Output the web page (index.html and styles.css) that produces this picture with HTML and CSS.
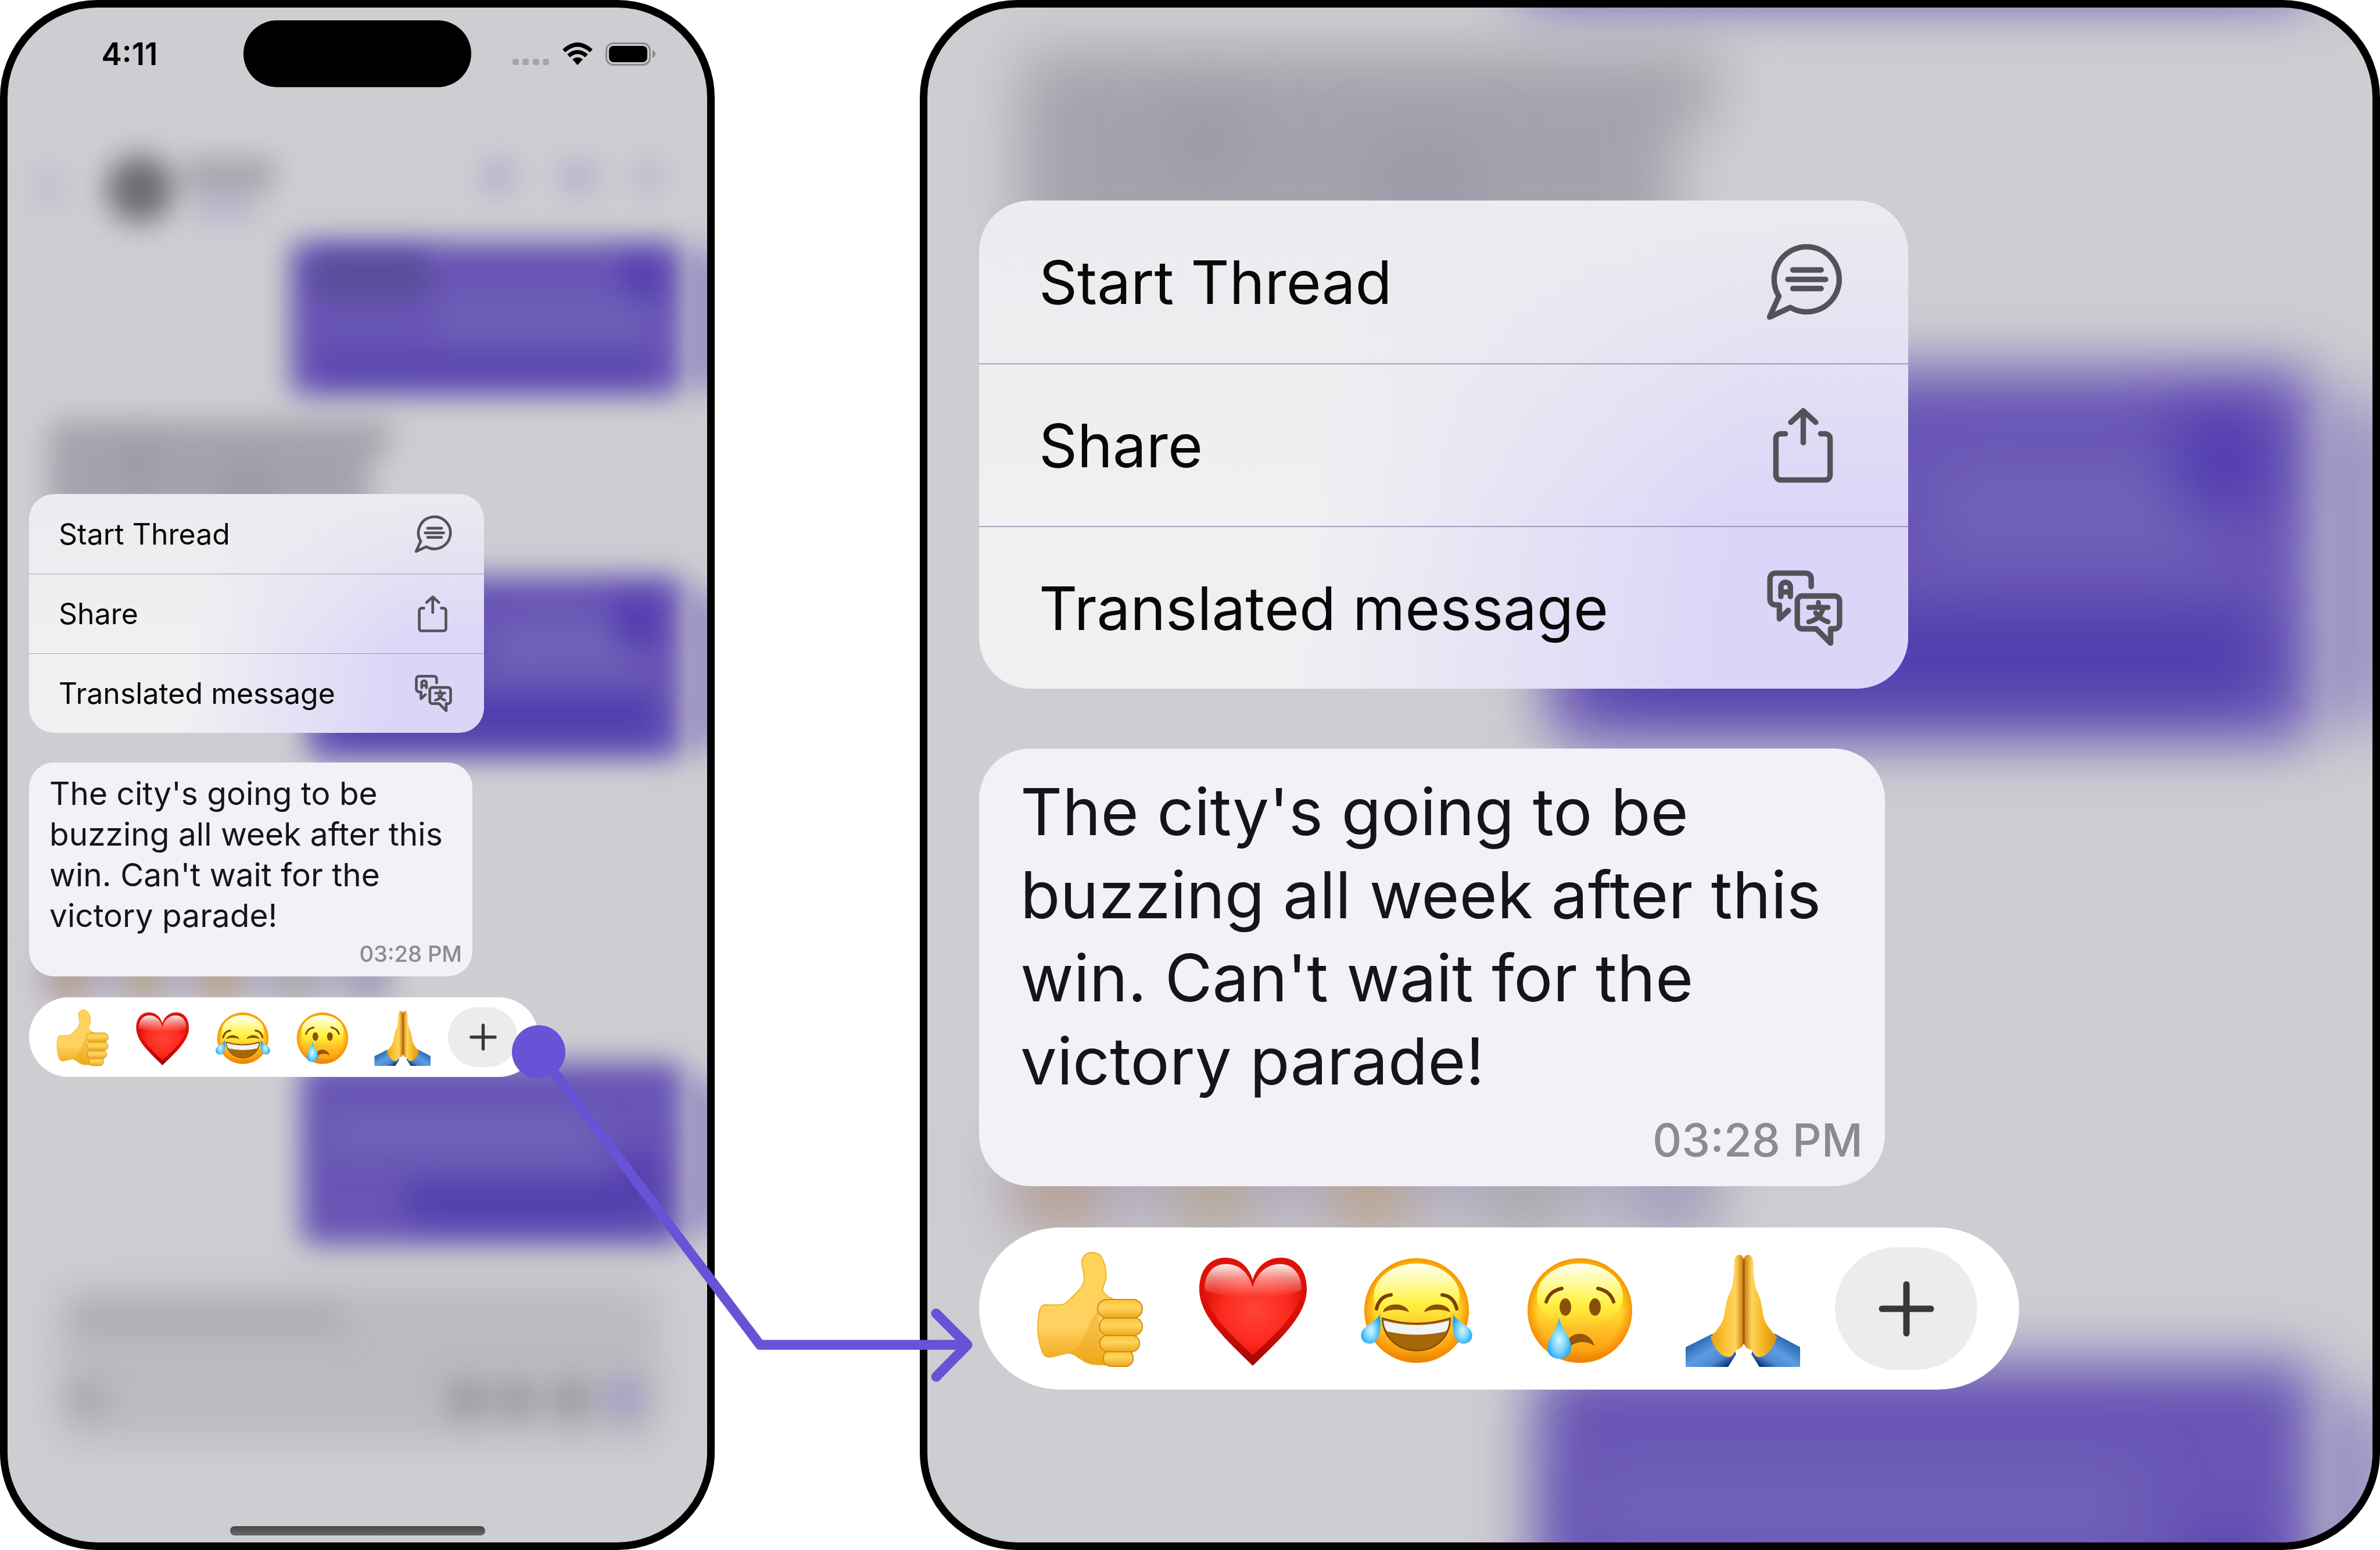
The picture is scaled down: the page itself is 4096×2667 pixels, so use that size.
FILE: index.html
```html
<!DOCTYPE html>
<html lang="en">
<head>
<meta charset="utf-8">
<title>Message reactions</title>
<link rel="stylesheet" href="styles.css">
</head>
<body>
<svg class="library" width="0" height="0" aria-hidden="true">
  <defs>
    <linearGradient id="face" x1="0" y1="0" x2="0" y2="1">
      <stop offset="0" stop-color="#ffd800"/><stop offset=".5" stop-color="#ffdb2c"/><stop offset=".72" stop-color="#ffb924"/><stop offset=".88" stop-color="#fba512"/><stop offset="1" stop-color="#d67a0c"/>
    </linearGradient>
    <radialGradient id="rim">
      <stop offset=".78" stop-color="#fb9200" stop-opacity="0"/><stop offset="1" stop-color="#f58600" stop-opacity=".85"/>
    </radialGradient>
    <linearGradient id="glow" x1="0" y1="0" x2="0" y2="1">
      <stop offset="0" stop-color="#fffff0"/><stop offset=".3" stop-color="#fffba0"/><stop offset=".6" stop-color="#fff54a" stop-opacity=".9"/><stop offset="1" stop-color="#ffe030" stop-opacity="0"/>
    </linearGradient>
    <radialGradient id="tear" cx="50%" cy="55%" r="55%">
      <stop offset="0" stop-color="#d2f8ff"/><stop offset=".5" stop-color="#7fd6fb"/><stop offset="1" stop-color="#1ba4f4"/>
    </radialGradient>
    <linearGradient id="heart-edge" x1="0" y1="0" x2="0" y2="1">
      <stop offset="0" stop-color="#e01208"/><stop offset=".6" stop-color="#d80f08"/><stop offset="1" stop-color="#a00606"/>
    </linearGradient>
    <radialGradient id="heart-fill" cx="52%" cy="52%" r="52%">
      <stop offset="0" stop-color="#ff4436"/><stop offset=".65" stop-color="#fd2a1f"/><stop offset="1" stop-color="#e3150c"/>
    </radialGradient>
    <linearGradient id="shine" x1="0" y1="0" x2="0" y2="1">
      <stop offset="0" stop-color="#fff" stop-opacity=".95"/><stop offset=".4" stop-color="#fff" stop-opacity=".5"/><stop offset="1" stop-color="#fff" stop-opacity="0"/>
    </linearGradient>
    <linearGradient id="skin" x1="0" y1="0" x2="0" y2="1">
      <stop offset="0" stop-color="#ffd257"/><stop offset=".65" stop-color="#ffd262"/><stop offset="1" stop-color="#eea817"/>
    </linearGradient>
    <linearGradient id="finger" x1="0" y1="0" x2="0" y2="1">
      <stop offset="0" stop-color="#fcc536"/><stop offset=".45" stop-color="#ffd45c"/><stop offset="1" stop-color="#eca71c"/>
    </linearGradient>
    <linearGradient id="palm-left" x1="0" y1="0" x2="1" y2="0">
      <stop offset="0" stop-color="#e9a012"/><stop offset=".45" stop-color="#fcc535"/><stop offset=".75" stop-color="#ffd45e"/><stop offset="1" stop-color="#c8780c"/>
    </linearGradient>
    <linearGradient id="palm-right" x1="1" y1="0" x2="0" y2="0">
      <stop offset="0" stop-color="#dd900c"/><stop offset=".45" stop-color="#f7b826"/><stop offset=".75" stop-color="#ffd45e"/><stop offset="1" stop-color="#c8780c"/>
    </linearGradient>
    <linearGradient id="sleeve-left" x1="0" y1="0" x2="1" y2="1">
      <stop offset=".1" stop-color="#15559c"/><stop offset=".5" stop-color="#5c9ce2"/><stop offset=".72" stop-color="#4a88d0"/><stop offset=".9" stop-color="#0a2f78"/>
    </linearGradient>
    <linearGradient id="sleeve-right" x1="1" y1="0" x2="0" y2="1">
      <stop offset=".1" stop-color="#15559c"/><stop offset=".5" stop-color="#5c9ce2"/><stop offset=".72" stop-color="#4a88d0"/><stop offset=".9" stop-color="#0a2f78"/>
    </linearGradient>
    <filter id="soft" x="-50%" y="-50%" width="200%" height="200%"><feGaussianBlur stdDeviation="25"/></filter>
    <filter id="softer" x="-50%" y="-50%" width="200%" height="200%"><feGaussianBlur stdDeviation="34"/></filter>
    <filter id="edge" x="-50%" y="-50%" width="200%" height="200%"><feGaussianBlur stdDeviation="9 26"/></filter>
  </defs>

  <symbol id="chat" viewBox="0 0 1230 2667">
    <g filter="url(#edge)" fill="#a49dc6">
      <rect x="1190" y="430" width="70" height="240"/>
      <rect x="1190" y="1020" width="70" height="270"/>
      <rect x="1190" y="1860" width="70" height="260"/>
    </g>
    <g filter="url(#soft)">
      <rect x="62" y="290" width="44" height="64" fill="#bebacf"/>
      <circle cx="241" cy="325" r="58" fill="#6c6c70"/>
      <rect x="316" y="275" width="156" height="50" fill="#a09fa4"/>
      <rect x="332" y="336" width="108" height="42" fill="#b6b1cd"/>
      <rect x="832" y="276" width="50" height="56" fill="#b0aacd"/>
      <rect x="966" y="280" width="58" height="50" fill="#b0aacd"/>
      <rect x="1092" y="276" width="46" height="56" fill="#b9b5cf"/>
      <rect x="500" y="416" width="676" height="264" rx="20" fill="#6855b5"/>
      <rect x="88" y="724" width="584" height="60" fill="#a4a3ab"/>
      <rect x="84" y="750" width="552" height="150" fill="#a4a3ad"/>
      <rect x="529" y="991" width="648" height="314" rx="20" fill="#6855b5"/>
      <rect x="70" y="1630" width="604" height="84" fill="#b2adc2"/>
      <rect x="518" y="1828" width="659" height="314" rx="20" fill="#6855b5"/>
    </g>
    <g filter="url(#soft)">
      <rect x="540" y="440" width="196" height="72" fill="#594b96"/>
      <rect x="1070" y="446" width="66" height="70" fill="#513bb0"/>
      <rect x="760" y="510" width="340" height="80" fill="#6e5fb7"/>
      <rect x="550" y="606" width="570" height="40" fill="#5643ae"/>
      <rect x="210" y="770" width="60" height="60" fill="#9a99a5"/>
      <rect x="380" y="800" width="90" height="60" fill="#9a99a5"/>
      <rect x="860" y="1070" width="220" height="80" fill="#7162b8"/>
      <rect x="1054" y="1030" width="80" height="80" fill="#513bb0"/>
      <rect x="580" y="1194" width="550" height="74" fill="#503dad"/>
      <rect x="94" y="1660" width="50" height="54" fill="#b99a7c"/>
      <rect x="220" y="1660" width="54" height="54" fill="#b8a584"/>
      <rect x="352" y="1660" width="54" height="54" fill="#bca17a"/>
      <rect x="486" y="1660" width="46" height="54" fill="#a9a5a0"/>
      <rect x="610" y="1660" width="50" height="54" fill="#9d98b6"/>
      <rect x="560" y="1910" width="470" height="80" fill="#6f60b7"/>
      <rect x="700" y="2034" width="430" height="64" fill="#503dad"/>
      <rect x="1070" y="1980" width="58" height="100" fill="#523eae"/>
    </g>
    <g filter="url(#softer)">
      <rect x="100" y="2212" width="1036" height="268" rx="30" fill="#bbbabf"/>
    </g>
    <g filter="url(#soft)">
      <rect x="130" y="2248" width="460" height="48" fill="#acabb0"/>
      <circle cx="151" cy="2407" r="32" fill="#a7a6ab"/>
      <circle cx="804" cy="2407" r="36" fill="#9a9a9e"/>
      <circle cx="888" cy="2407" r="34" fill="#9a9a9e"/>
      <circle cx="983" cy="2407" r="36" fill="#9a9a9e"/>
      <circle cx="1075" cy="2405" r="38" fill="#a59ec4"/>
    </g>
  </symbol>

  <symbol id="thread" viewBox="0 0 152 152">
    <path d="M24 105A65.500 65.500 0 1 1 47 127.500L5 147Z"/>
    <path d="M52 52H109M42 71H118M52 89.500H109"/>
  </symbol>
  <symbol id="share" viewBox="0 0 152 152">
    <path d="M37 53H28A10 10 0 0 0 18 63V136A10 10 0 0 0 28 146H117A10 10 0 0 0 127 136V63A10 10 0 0 0 117 53H108"/>
    <path d="M73 71V7M48 30L73 7L98 30"/>
  </symbol>
  <symbol id="translate" viewBox="0 0 152 152">
    <path d="M89 33V17A11 11 0 0 0 78 6H17A11 11 0 0 0 6 17V59A11 11 0 0 0 17 70H25V98L43 81"/>
    <path d="M28 53V34A9.500 9.500 0 0 1 47 34V53M28 44H47"/>
    <path d="M99 118H71A10 10 0 0 1 61 108V62A10 10 0 0 1 71 52H136A10 10 0 0 1 146 62V108A10 10 0 0 1 136 118H128V147Z"/>
    <path stroke-width="10" d="M84 75H123M103.500 65V75M113 77Q106 100 84 104M98 86Q108 100 123 104"/>
  </symbol>

  <symbol id="thumb" viewBox="0 0 200 200">
    <path fill="url(#skin)" stroke="#f0b02c" stroke-width="2" d="M86 18C88 0 112 0 119 10C127 24 129 36 127 50C124 60 120 66 122 70C128 78 136 83 148 86L172 100V180L150 196C130 196 105 198 94 192C80 186 74 176 62 176L33 183C24 184 20 180 17 172C8 146 9 120 14 100C16 94 20 93 24 93C36 94 46 94 56 92C70 78 88 66 90 50C91 38 85 28 86 18Z"/>
    <path fill="#eda91c" opacity=".45" d="M113 104C92 124 98 160 62 176C74 176 80 186 94 192C105 197 118 196 124 196Z"/>
    <g fill="url(#finger)" stroke="#cf8b18" stroke-width="2">
      <rect x="123" y="171" width="51" height="28" rx="13"/>
      <rect x="117" y="145" width="68" height="29" rx="14"/>
      <rect x="116" y="115" width="74" height="31" rx="15"/>
      <rect x="113" y="84" width="77" height="32" rx="16"/>
    </g>
  </symbol>
  <symbol id="heart" viewBox="0 0 200 200">
    <path fill="url(#heart-edge)" d="M99 50C92 26 74 12 52 12C24 12 7 34 7 66C7 112 52 152 99 198C146 152 192 112 192 66C192 34 175 12 147 12C125 12 106 26 99 50Z"/>
    <path fill="url(#heart-fill)" d="M99 63C92 38 76 21 53 21C30 21 15 40 16 67C18 104 58 142 99 180C140 142 181 104 183 67C184 40 168 21 146 21C124 21 106 38 99 63Z"/>
    <path fill="url(#shine)" d="M99 63C92 38 76 23 53 23C30 23 16 40 16 67C40 84 160 84 183 67C183 40 168 23 146 23C124 23 106 38 99 63Z"/>
  </symbol>
  <symbol id="joy" viewBox="0 0 200 200">
    <circle cx="100" cy="103" r="90" fill="url(#face)"/>
    <circle cx="100" cy="103" r="90" fill="url(#rim)"/>
    <ellipse cx="100" cy="78" rx="74" ry="56" fill="url(#glow)"/>
    <g fill="none" stroke="#7a3f06" stroke-width="6" stroke-linecap="round">
      <path d="M31 100Q36 78 56 76"/><path d="M169 100Q164 78 144 76"/>
    </g>
    <path fill="#8a4f08" d="M42 106C46 88 82 88 87 106C76 100 54 100 42 106ZM113 106C118 88 154 88 158 106C146 100 124 100 113 106Z"/>
    <path fill="#a66708" stroke="#7a4206" stroke-width="2" d="M41 116Q100 134 158 116C158 150 132 172 100 172C68 172 42 150 41 116Z"/>
    <path fill="#f3f3f6" d="M43 120Q100 136 156 120Q155 134 150 139Q100 150 50 139Q44 134 43 120Z"/>
    <path fill="url(#tear)" d="M37 110C40 134 36 160 20 160C4 160 0 144 9 134C18 126 28 122 37 110Z"/>
    <path fill="url(#tear)" d="M163 110C160 134 164 160 180 160C196 160 200 144 191 134C182 126 172 122 163 110Z"/>
  </symbol>
  <symbol id="cry" viewBox="0 0 200 200">
    <circle cx="100" cy="103" r="90" fill="url(#face)"/>
    <circle cx="100" cy="103" r="90" fill="url(#rim)"/>
    <ellipse cx="100" cy="78" rx="74" ry="56" fill="url(#glow)"/>
    <g fill="none" stroke="#7a3f06" stroke-width="6" stroke-linecap="round">
      <path d="M42 88Q48 69 69 65"/><path d="M158 88Q152 69 131 65"/>
    </g>
    <ellipse cx="75" cy="97" rx="10" ry="15" fill="#8a4f08"/>
    <ellipse cx="126" cy="97" rx="10" ry="15" fill="#8a4f08"/>
    <path fill="#93560a" d="M76 164C80 136 118 136 125 164C112 154 94 156 84 164Z"/>
    <path fill="url(#tear)" d="M64 115C68 134 85 150 85 166C85 178 76 186 64 186C52 186 43 178 44 166C45 150 62 134 64 115Z"/>
  </symbol>
  <symbol id="pray" viewBox="0 0 200 200">
    <path fill="url(#sleeve-left)" d="M47 143L1 166V200H74L88 178L84 168Z"/>
    <path fill="url(#sleeve-right)" d="M155 143L198 166V200H128L114 178L118 168Z"/>
    <path fill="url(#palm-left)" d="M101 14C98 4 86 4 85 18C84 44 83 56 79 68C72 80 70 96 68 108C66 124 56 136 44 148C48 166 62 184 76 183C84 182 84 172 90 170C96 168 98 166 101 160Z"/>
    <path fill="url(#palm-right)" d="M101 14C104 4 116 4 117 18C118 44 119 56 123 68C130 80 132 96 134 108C136 124 146 136 158 148C154 166 140 184 126 183C118 182 118 172 112 170C106 168 104 166 101 160Z"/>
    <path stroke="#98590a" stroke-width="3" d="M101 16V160"/>
  </symbol>
</svg>

<main class="board">
  <section class="device device-small">
    <svg class="backdrop" viewBox="13 13 1204 2641" preserveAspectRatio="xMidYMid slice" aria-hidden="true"><use href="#chat" width="1230" height="2667"/></svg>
    <header class="status">
      <time class="clock">4:11</time>
      <div class="island"></div>
      <div class="indicators">
        <svg class="signal" viewBox="0 0 64 40" aria-hidden="true"><g fill="#a5a4a8"><rect y="28" width="11" height="11" rx="4"/><rect x="17" y="28" width="11" height="11" rx="4"/><rect x="35" y="28" width="11" height="11" rx="4"/><rect x="52" y="28" width="11" height="11" rx="4"/></g></svg>
        <svg class="wifi" viewBox="0 0 52 40" aria-hidden="true"><path d="M26 39L17 29Q26 22 35 29Z"/><g fill="none" stroke="#000" stroke-width="7"><path d="M10.500 23Q26 10 41.500 23"/><path d="M2.500 14.500Q26 -7 49.500 14.500"/></g></svg>
        <svg class="battery" viewBox="0 0 86 40" aria-hidden="true"><rect x="1.500" y="1.500" width="75" height="37" rx="12" fill="none" stroke="#8b8b8d" stroke-width="3"/><rect x="6" y="6" width="66" height="28" rx="8"/><path d="M81 13Q86 16 86 20Q86 24 81 27Z" fill="#8b8b8d"/></svg>
      </div>
    </header>
    <div class="context">
      <div class="menu">
        <button class="menu-item" type="button">Start Thread<svg class="icon" aria-hidden="true"><use href="#thread"/></svg></button>
        <button class="menu-item" type="button">Share<svg class="icon" aria-hidden="true"><use href="#share"/></svg></button>
        <button class="menu-item" type="button">Translated message<svg class="icon" aria-hidden="true"><use href="#translate"/></svg></button>
      </div>
      <article class="bubble">
        <p class="text">The city's going to be<br>buzzing all week after this<br>win. Can't wait for the<br>victory parade!</p>
        <time class="sent">03:28 PM</time>
      </article>
      <div class="reactions">
        <button class="reaction" type="button" aria-label="Thumbs up"><svg class="emoji"><use href="#thumb"/></svg></button>
        <button class="reaction" type="button" aria-label="Heart"><svg class="emoji"><use href="#heart"/></svg></button>
        <button class="reaction" type="button" aria-label="Tears of joy"><svg class="emoji"><use href="#joy"/></svg></button>
        <button class="reaction" type="button" aria-label="Crying"><svg class="emoji"><use href="#cry"/></svg></button>
        <button class="reaction" type="button" aria-label="Folded hands"><svg class="emoji"><use href="#pray"/></svg></button>
        <button class="reaction more" type="button" aria-label="More reactions"><svg class="plus" viewBox="0 0 96 96"><path d="M48 6V90M6 48H90"/></svg></button>
      </div>
    </div>
    <div class="home"></div>
  </section>

  <section class="device device-large">
    <svg class="backdrop" viewBox="6 687 1218 1293" preserveAspectRatio="xMidYMid slice" aria-hidden="true"><use href="#chat" width="1230" height="2667"/></svg>
    <div class="context">
      <div class="menu">
        <button class="menu-item" type="button">Start Thread<svg class="icon" aria-hidden="true"><use href="#thread"/></svg></button>
        <button class="menu-item" type="button">Share<svg class="icon" aria-hidden="true"><use href="#share"/></svg></button>
        <button class="menu-item" type="button">Translated message<svg class="icon" aria-hidden="true"><use href="#translate"/></svg></button>
      </div>
      <article class="bubble">
        <p class="text">The city's going to be<br>buzzing all week after this<br>win. Can't wait for the<br>victory parade!</p>
        <time class="sent">03:28 PM</time>
      </article>
      <div class="reactions">
        <button class="reaction" type="button" aria-label="Thumbs up"><svg class="emoji"><use href="#thumb"/></svg></button>
        <button class="reaction" type="button" aria-label="Heart"><svg class="emoji"><use href="#heart"/></svg></button>
        <button class="reaction" type="button" aria-label="Tears of joy"><svg class="emoji"><use href="#joy"/></svg></button>
        <button class="reaction" type="button" aria-label="Crying"><svg class="emoji"><use href="#cry"/></svg></button>
        <button class="reaction" type="button" aria-label="Folded hands"><svg class="emoji"><use href="#pray"/></svg></button>
        <button class="reaction more" type="button" aria-label="More reactions"><svg class="plus" viewBox="0 0 96 96"><path d="M48 6V90M6 48H90"/></svg></button>
      </div>
    </div>
  </section>

  <svg class="connector" viewBox="0 0 4096 2667" aria-hidden="true">
    <circle cx="927" cy="1810" r="46"/>
    <path d="M927 1810L1308 2314H1662M1611 2260L1665 2314L1611 2369"/>
  </svg>
</main>
</body>
</html>
```
FILE: styles.css
```css
* {
  box-sizing: border-box;
}

body {
  margin: 0;
  background: #fff;
  color: #000;
  font-family: Inter, "Liberation Sans", sans-serif;
}

.library {
  position: absolute;
}

.board {
  position: relative;
  display: grid;
  grid-template-columns: 1230fr 2513fr;
  column-gap: 353px;
  min-height: 100vh;
}

/* The arrow from the phone to the enlarged view */
.connector {
  position: absolute;
  inset: 0;
  width: 100%;
  height: 100%;
  fill: #6852d6;
  pointer-events: none;
}

.connector path {
  fill: none;
  stroke: #6852d6;
  stroke-width: 17;
  stroke-linecap: round;
  stroke-linejoin: round;
}

.device {
  position: relative;
  display: flex;
  flex-direction: column;
  overflow: hidden;
  border: 13px solid #000;
  border-radius: 168px;
  background: #cecdd1;
}

.backdrop {
  position: absolute;
  inset: 0;
  width: 100%;
  height: 100%;
}

.device-small {
  --inset: 37px;
  --menu-width: 783px;
  --menu-radius: 43px;
  --menu-text: 50px;
  --row: 137px;
  --row-pad: 0 55px 0 51px;
  --rule: 1px;
  --icon: 64px;
  --menu-gap: 51px;
  --bubble-width: 763px;
  --bubble-pad: 18px 18px 7px 35px;
  --text: 55px;
  --line: 70px;
  --sent: 38px;
  --sent-line: 63px;
  --bar-gap: 36px;
  --bar-width: 877px;
  --bar-pad: 0 27px 0 23px;
  --bar: 137px;
  --emoji: 98px;
  --more: 120px;
  --more-height: 103px;
  --plus: 47px;
}

.device-large {
  --inset: 89px;
  --menu-width: 1599px;
  --menu-radius: 88px;
  --menu-text: 103px;
  --row: 280px;
  --row-pad: 0 113px 0 103px;
  --rule: 2px;
  --icon: 130px;
  --menu-gap: 103px;
  --bubble-width: 1559px;
  --bubble-pad: 37px 38px 14px 71px;
  --text: 112px;
  --line: 143px;
  --sent: 78px;
  --sent-line: 130px;
  --bar-gap: 71px;
  --bar-width: 1790px;
  --bar-pad: 0 54px 0 50px;
  --bar: 279px;
  --emoji: 200px;
  --more: 245px;
  --more-height: 211px;
  --plus: 96px;
  padding-top: 332px;
}

.status {
  position: relative;
  display: grid;
  grid-template-columns: 1fr 392px 1fr;
  align-items: center;
  padding-top: 22px;
}

.clock {
  padding-left: 14px;
  text-align: center;
  font-size: 53px;
  line-height: 64px;
  font-weight: 600;
}

.island {
  height: 115px;
  border-radius: 58px;
  background: #000;
}

.indicators {
  display: flex;
  justify-content: center;
  gap: 22px;
  padding-right: 18px;
}

.signal,
.wifi,
.battery {
  height: 40px;
}

.signal {
  width: 64px;
}

.wifi {
  width: 52px;
}

.battery {
  width: 86px;
}

.context {
  position: relative;
  padding-left: var(--inset);
}

.device-small .context {
  margin-top: 700px;
}

.menu {
  width: var(--menu-width);
  overflow: hidden;
  border-radius: var(--menu-radius);
  background:
    linear-gradient(180deg, #ecebef 0%, rgba(236, 235, 240, 0) 65%),
    linear-gradient(98deg, #eff0f2 38%, #dcd5f8 80%);
}

.menu-item {
  display: flex;
  align-items: center;
  justify-content: space-between;
  width: 100%;
  height: var(--row);
  padding: var(--row-pad);
  border: 0;
  background: none;
  color: #080808;
  font: 400 var(--menu-text) Inter, "Liberation Sans", sans-serif;
}

.menu-item + .menu-item {
  border-top: var(--rule) solid rgba(60, 50, 110, .4);
}

.icon {
  width: var(--icon);
  height: var(--icon);
  fill: none;
  stroke: #545259;
  stroke-width: 11;
  stroke-linecap: round;
  stroke-linejoin: round;
}

.bubble {
  width: var(--bubble-width);
  margin-top: var(--menu-gap);
  padding: var(--bubble-pad);
  border-radius: var(--menu-radius);
  background: #f2f1f8;
}

.text {
  margin: 0;
  color: #151517;
  font-size: var(--text);
  line-height: var(--line);
  white-space: nowrap;
}

.sent {
  display: block;
  color: #8b8b90;
  font-size: var(--sent);
  font-weight: 500;
  line-height: var(--sent-line);
  text-align: right;
}

.reactions {
  display: grid;
  grid-template-columns: repeat(6, 1fr);
  align-items: center;
  justify-items: center;
  width: var(--bar-width);
  height: var(--bar);
  margin-top: var(--bar-gap);
  padding: var(--bar-pad);
  border-radius: var(--bar);
  background: #fff;
}

.reaction {
  display: flex;
  align-items: center;
  justify-content: center;
  padding: 0;
  border: 0;
  background: none;
}

.emoji {
  width: var(--emoji);
  height: var(--emoji);
}

.more {
  width: var(--more);
  height: var(--more-height);
  border-radius: var(--more);
  background: #ececec;
}

.plus {
  width: var(--plus);
  height: var(--plus);
  fill: none;
  stroke: #383838;
  stroke-width: 11;
  stroke-linecap: round;
}

.home {
  position: relative;
  align-self: center;
  width: 439px;
  height: 16px;
  margin: auto 0 12px;
  border-radius: 8px;
  background: linear-gradient(#444, #6a6a6a);
}
```
